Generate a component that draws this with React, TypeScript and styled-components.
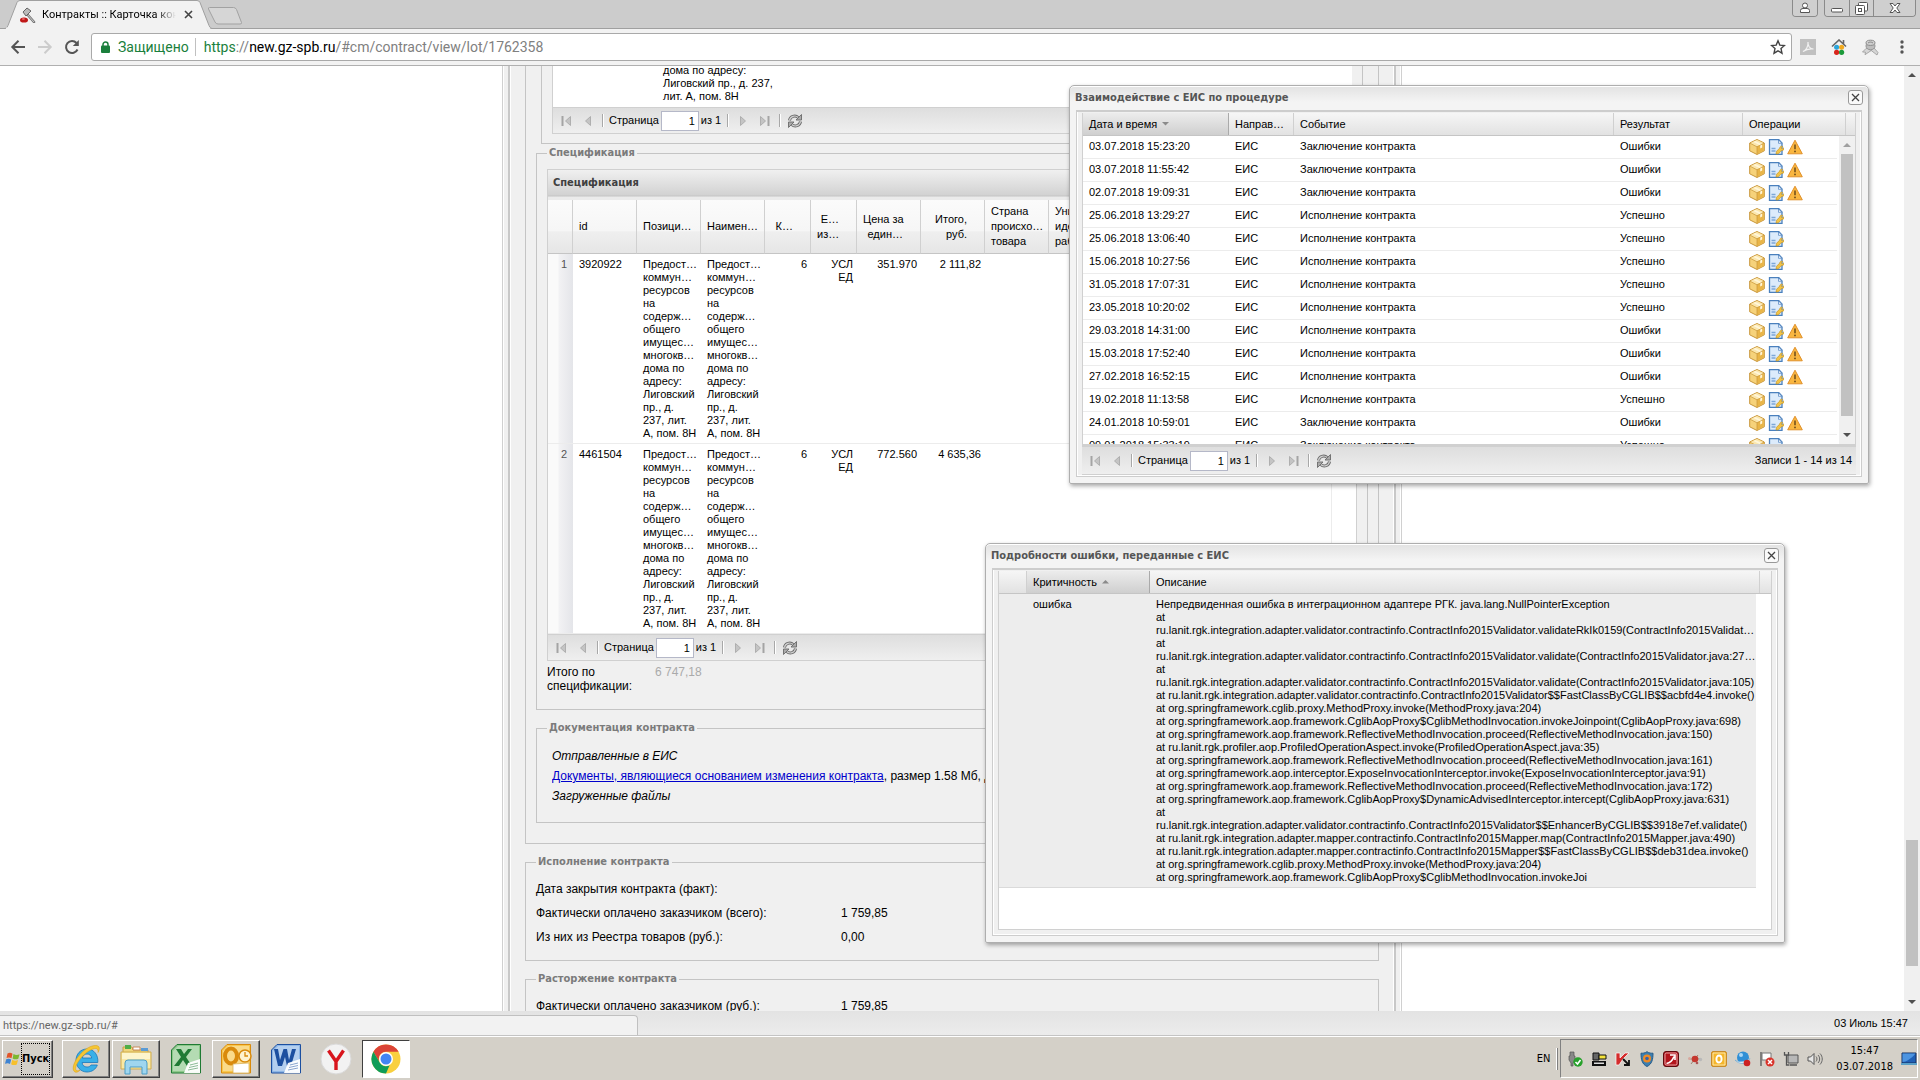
import React from 'react';
import styled, { createGlobalStyle, css } from 'styled-components';

const UI = '"DejaVu Sans Condensed", "DejaVu Sans", sans-serif';
const GRID = '"Liberation Sans", Arial, sans-serif';
const LINE = '#d0d0d0';

const GlobalStyle = createGlobalStyle`
  *, *::before, *::after { box-sizing: border-box; }
  html, body { margin: 0; height: 100%; }
  body { font: 12px/14px ${GRID}; color: #000; background: #fff; overflow: hidden; }
  button, input { font: inherit; color: inherit; padding: 0; margin: 0; }
  button { background: none; border: 0; }
  svg { display: block; flex: none; }
`;

const Screen = styled.div`
  position: relative;
  display: flex;
  flex-direction: column;
  height: 100vh;
  overflow: hidden;
`;

/* ---------- browser chrome ---------- */

const TabStrip = styled.header`
  display: flex;
  align-items: flex-start;
  height: 29px;
  padding: 0 4px;
  background: #ccc;
  border-bottom: 1px solid #a0a0a0;
`;

const Tab = styled.div`
  position: relative;
  display: flex;
  align-items: center;
  width: 208px;
  height: 29px;
  padding: 0 16px;
  font: 11px/14px Roboto, sans-serif;
`;

const TabShape = styled.svg`
  position: absolute;
  left: 0;
  top: 0;
`;

const TabTitle = styled.span`
  position: relative;
  flex: 1;
  margin: 0 8px 0 6px;
  overflow: hidden;
  white-space: nowrap;
  mask-image: linear-gradient(90deg, #000 85%, transparent);
`;

const TabIcon = styled.span`
  position: relative;
`;

const TabClose = styled.button`
  position: relative;
  width: 12px;
  height: 12px;
`;

const NewTab = styled.button`
  margin: 7px auto 0 -5px;
`;

const ChromeButtons = styled.div`
  display: flex;
  height: 17px;
  margin-left: 6px;
  border: 1px solid #8a8a8a;
  border-top: 0;
  border-radius: 0 0 4px 4px;
  overflow: hidden;
`;

const ChromeButton = styled.button<{ $wide?: boolean }>`
  display: flex;
  align-items: center;
  justify-content: center;
  width: ${p => (p.$wide ? 42 : 24)}px;
  background: #cfcfcf;
  & + & { border-left: 1px solid #8a8a8a; }
`;

const Toolbar = styled.nav`
  display: flex;
  align-items: center;
  height: 37px;
  padding: 0 10px;
  background: #f2f2f2;
  border-bottom: 1px solid #b0b0b0;
`;

const NavButton = styled.button`
  display: flex;
  justify-content: center;
  width: 16px;
  margin-right: 11px;
`;

const Omnibox = styled.div`
  flex: 1;
  display: flex;
  align-items: center;
  height: 28px;
  padding: 0 5px 0 9px;
  background: #fff;
  border: 1px solid #a9a9a9;
  border-radius: 3px;
  font: 14px/18px Roboto, sans-serif;
  color: #808080;
`;

const Secure = styled.span`
  margin-left: 8px;
  padding-right: 6px;
  border-right: 1px solid #c0c0c0;
  color: #1a7f3c;
`;

const Url = styled.span`
  flex: 1;
  margin-left: 8px;
  em { font-style: normal; color: #1a7f3c; }
  b { font-weight: 400; color: #000; }
`;

const Extensions = styled.div`
  display: flex;
  align-items: center;
  gap: 15px;
  padding-left: 8px;
`;

/* ---------- page ---------- */

const Viewport = styled.div`
  flex: 1;
  min-height: 0;
  display: flex;
  background: #fff;
`;

const Scroller = styled.main`
  flex: 1;
  min-width: 0;
  height: 100%;
  overflow: hidden;
`;

const PageFrame = styled.div`
  width: 900px;
  min-height: 100%;
  margin: 0 auto;
  padding: 0 5px;
  background: #f0f0f0;
  border: solid ${LINE};
  border-width: 0 1px;
  box-shadow: inset 1px 0 #fff, inset -1px 0 #fff;
`;

const PageBody = styled.div`
  min-height: 100%;
  padding: 0 15px;
  border: solid #c8c8c8;
  border-width: 0 2px;
  box-shadow: inset 1px 0 #fff, inset -1px 0 #fff;
`;

const Section = styled.fieldset<{ $top?: number; $open?: boolean }>`
  min-width: 0;
  margin: ${p => p.$top ?? 11}px 0 0;
  padding: 0 10px;
  border: 1px solid #c4c4c4;
  ${p => p.$open && css`border-top: 0;`}
`;

const Caption = styled.legend`
  padding: 0 2px;
  height: 14px;
  font: bold 11px/14px ${UI};
  color: #7b7b7b;
`;

const UpperBox = styled.div`
  margin: 0 5px;
  padding: 0 10px 9px;
  border: 1px solid #c4c4c4;
  border-top: 0;
`;

const UpperRow = styled.div`
  display: flex;
  align-items: flex-end;
  height: 41px;
  padding: 0 22px 4px 110px;
  overflow: hidden;
  background: #fff;
  border-left: 1px solid ${LINE};
  font-size: 11px;
  line-height: 13px;
`;

const OuterPad = styled.div`
  padding-bottom: 20px;
`;

const SpecPanel = styled.div`
  margin-top: 9px;
  border: 1px solid ${LINE};
  border-bottom: 0;
  background: #fff;
`;

const PanelTitle = styled.h2`
  margin: 0;
  height: 30px;
  padding: 6px 5px;
  font: bold 11px/14px ${UI};
  color: #404040;
  background: linear-gradient(#f0f0f0, #d2d2d2 25px, #c4c4c4 26px, #ebebeb 27px, #ebebeb);
`;

const SpecTable = styled.table`
  width: calc(100% - 24px);
  table-layout: fixed;
  border-collapse: separate;
  border-spacing: 0;
  border-right: 1px solid #ececec;
  font-size: 11px;
  line-height: 13px;
`;

const SpecHead = styled.th<{ $num?: boolean }>`
  height: 54px;
  padding: 0 ${p => (p.$num ? 17 : 0)}px 0 6px;
  font-weight: 400;
  line-height: 15px;
  white-space: pre;
  text-align: ${p => (p.$num ? 'right' : 'left')};
  vertical-align: middle;
  background: linear-gradient(#fbfbfb, #f6f6f6 58%, #efefef 60%, #e6e6e6);
  border-right: 1px solid ${LINE};
  border-bottom: 1px solid #c5c5c5;
`;

const SpecCell = styled.td<{ $num?: boolean; $index?: boolean }>`
  padding: 4px 4px 3px 6px;
  vertical-align: top;
  white-space: pre;
  overflow: hidden;
  text-align: ${p => (p.$num || p.$index ? 'right' : 'left')};
  border-bottom: 1px solid #ececec;
  ${p =>
    p.$index &&
    css`
      padding-right: 6px;
      color: #555;
      background: linear-gradient(90deg, #fafafa 10px, #f2f2f4 11px, #e4e5e9);
    `}
`;

const PagerBar = styled.div<{ $tall?: boolean }>`
  display: flex;
  align-items: center;
  height: ${p => (p.$tall ? 30 : 27)}px;
  padding: 0 3px;
  font-size: 11px;
  line-height: 13px;
  background: linear-gradient(#dedede, #efefef);
  border: 1px solid ${LINE};
  ${p => p.$tall && css`border-width: 2px 0 1px;`}
`;

const PagerButton = styled.button`
  display: flex;
  align-items: center;
  justify-content: center;
  width: 20px;
  height: 20px;
  & + & { margin-left: 2px; }
`;

const PagerRule = styled.i`
  width: 2px;
  height: 13px;
  margin: 0 4px;
  border-left: 1px solid #a8a8a8;
  border-right: 1px solid #fff;
`;

const PagerInput = styled.input`
  width: 38px;
  height: 20px;
  margin: 0 2px;
  padding-right: 3px;
  text-align: right;
  background: #fff;
  border: 1px solid #b5b8c8;
`;

const PagerText = styled.label`
  padding-left: 1px;
`;

const PagerTotal = styled.span`
  padding-right: 2px;
`;

const PagerInfo = styled.span`
  margin-left: auto;
  padding-right: 1px;
`;

const Total = styled.div`
  display: flex;
  margin: 4px 0 16px;
  span { width: 108px; white-space: pre; }
  output { color: #aaa; }
`;

const Docs = styled.div`
  padding: 11px 5px 16px;
  line-height: 20px;
  p { margin: 0; white-space: nowrap; overflow: hidden; }
  a { color: #0000cc; }
`;

const Facts = styled.dl`
  display: grid;
  grid-template-columns: 305px 1fr;
  grid-auto-rows: 24px;
  align-items: center;
  margin: 0;
  padding: 8px 0 11px;
  dd { margin: 0; }
`;

/* ---------- scrollbars ---------- */

const ScrollBar = styled.div`
  display: flex;
  flex-direction: column;
  align-items: center;
  width: 16px;
  background: #f0f0f0;
`;

const ScrollArrow = styled.button`
  display: flex;
  align-items: center;
  justify-content: center;
  width: 16px;
  height: 18px;
`;

const Track = styled.div<{ $before: number; $after: number; $thumb: number }>`
  flex: 1;
  display: grid;
  grid-template-rows: ${p => p.$before}fr ${p => p.$thumb}fr ${p => p.$after}fr;
  width: 12px;
  &::before { content: ''; grid-row: 2; background: #c1c1c1; }
`;

/* ---------- floating windows ---------- */

const Dialog = styled.section<{ $x: number; $y: number }>`
  position: absolute;
  left: ${p => p.$x}px;
  top: ${p => p.$y}px;
  width: 800px;
  background: linear-gradient(#e2e2e2, #f4f4f4 16px);
  border: 1px solid #aeaeae;
  border-radius: 5px 5px 2px 2px;
  box-shadow: inset 0 1px #fff, 1px 2px 4px rgba(0, 0, 0, 0.35);
  padding: 0 6px 6px;
`;

const DialogHead = styled.header`
  display: flex;
  align-items: center;
  justify-content: space-between;
  height: 24px;
  margin: 0 -1px;
  padding-bottom: 1px;
  font: bold 11px/14px ${UI};
  color: #555;
`;

const DialogClose = styled.button`
  display: flex;
  align-items: center;
  justify-content: center;
  width: 15px;
  height: 15px;
  background: #fafafa;
  border: 1px solid #999;
  border-radius: 3px;
`;

const DialogTitle = styled.h2`
  margin: 0;
  font: inherit;
`;

const DialogBody = styled.div<{ $bottom?: number }>`
  padding: 1px 5px ${p => p.$bottom ?? 1}px;
  background: #f0f0f0;
  border: 1px solid #cdcdcd;
  border-top-width: 2px;
  box-shadow: inset 1px 0 #fff, inset -1px 0 #fff, inset 0 -1px #fff;
`;

const GridBox = styled.div`
  position: relative;
  background: #fff;
  border: 1px solid ${LINE};
  border-top: 0;
`;

const GridTable = styled.table<{ $height: number; $cols: string; $gutter: number }>`
  display: block;
  font-size: 11px;
  line-height: 13px;
  thead { display: block; background: linear-gradient(#f6f6f6, #e2e2e2); border-bottom: 1px solid #c5c5c5; }
  tbody { display: block; height: ${p => p.$height}px; padding-right: ${p => p.$gutter}px; overflow: hidden; }
  tr { display: grid; grid-template-columns: ${p => p.$cols}; }
  td[colspan='2'] { grid-column: span 2; }
`;

const HeadCell = styled.th<{ $sorted?: boolean }>`
  display: flex;
  align-items: center;
  gap: 5px;
  height: 22px;
  padding: 0 6px;
  font-weight: 400;
  white-space: nowrap;
  border-right: 1px solid ${LINE};
  ${p => p.$sorted && css`background: linear-gradient(#ececec, #cfcfcf); border-right-color: #aaa;`}
`;

const Row = styled.tr<{ $selected?: boolean }>`
  border-bottom: 1px solid #ececec;
  ${p => p.$selected && css`background: #ededed; border-color: #dadada;`}
`;

const Cell = styled.td`
  min-width: 0;
  padding: 4px 0 3px 6px;
  white-space: nowrap;
`;

const IconCell = styled.td`
  display: flex;
  align-items: center;
  gap: 3px;
  padding-left: 6px;
  height: 22px;
`;

const IconButton = styled.button`
  width: 16px;
  height: 16px;
`;

const TraceLine = styled.div`
  overflow: hidden;
  text-overflow: ellipsis;
`;

const GridScroll = styled(ScrollBar)`
  position: absolute;
  right: 0;
  top: 23px;
  bottom: 0;
`;

/* ---------- status bar and taskbar ---------- */

const StatusBar = styled.footer`
  display: flex;
  align-items: flex-end;
  justify-content: space-between;
  height: 25px;
  padding-right: 12px;
  background: linear-gradient(#e3e3e3, #ececec);
  border-bottom: 1px solid #c4c4c4;
  font-size: 11px;
`;

const LinkHint = styled.span`
  width: 638px;
  height: 20px;
  padding: 3px;
  font: 11px/14px Roboto, sans-serif;
  color: #666;
  background: #f2f2f2;
  border: solid #c0c0c0;
  border-width: 1px 1px 0 0;
  border-radius: 0 4px 0 0;
`;

const StatusDate = styled.time`
  align-self: center;
`;

const Taskbar = styled.footer`
  display: flex;
  align-items: center;
  gap: 2px;
  height: 44px;
  padding: 0 2px;
  background: #d4d0c8;
  border-top: 1px solid #fff;
  font: 11px/16px ${UI};
`;

const raised = css`
  border: 1px solid;
  border-color: #fff #404040 #404040 #fff;
  box-shadow: inset -1px -1px #808080;
`;

const StartButton = styled.button`
  ${raised}
  display: flex;
  align-items: center;
  width: 51px;
  height: 38px;
  margin-right: 7px;
  padding: 0 2px;
  font-weight: bold;
  span { padding: 7px 0; border: 1px dotted #000; }
`;

const TaskButton = styled.button<{ $state?: 'open' | 'active' }>`
  display: flex;
  align-items: center;
  justify-content: center;
  width: 48px;
  height: 38px;
  ${p => p.$state === 'open' && raised}
  ${p => p.$state === 'active' && css`background: #fff; border: 1px solid; border-color: #404040 #fff #fff #404040;`}
`;

const Lang = styled.span`
  margin-left: auto;
  padding-right: 4px;
`;

const LangRule = styled.i`
  width: 2px;
  height: 22px;
  border-left: 1px solid #fff;
  border-right: 1px solid #808080;
`;

const Tray = styled.div`
  display: flex;
  align-items: center;
  gap: 8px;
  height: 39px;
  padding: 0 0 0 6px;
  border: 1px solid;
  border-color: #808080 #fff #fff #808080;
`;

const Clock = styled.time`
  padding: 0 0 0 5px;
  text-align: center;
  white-space: pre;
`;

/* ---------- icons ---------- */

const Gavel = () => (
  <svg width="16" height="16" viewBox="0 0 16 16">
    <path d="M7 7l7 8" stroke="#777" strokeWidth="2.6" strokeLinecap="round" />
    <path d="M7 7l7 8" stroke="#ccc" strokeWidth="1" />
    <path d="M3 5l4-4 4 3-5 5z" fill="#bbb" stroke="#666" />
    <ellipse cx="4" cy="13" rx="4" ry="2.6" fill="#c01818" />
    <ellipse cx="3.4" cy="12" rx="1.6" ry=".8" fill="#f47a7a" />
  </svg>
);

const Cross = ({ s = 9, w = 1.6, c = '#444' }: { s?: number; w?: number; c?: string }) => (
  <svg width={s} height={s} viewBox="0 0 9 9"><path d="M1 1l7 7M8 1L1 8" stroke={c} strokeWidth={w} /></svg>
);

const Arrow = ({ dir, c }: { dir: 1 | -1; c: string }) => (
  <svg width="16" height="16" viewBox="0 0 16 16">
    <path transform={dir < 0 ? undefined : 'translate(16 0) scale(-1 1)'} d="M15 8H2.5M8.500 1.800L2.300 8l6.200 6.200" fill="none" stroke={c} strokeWidth="2" />
  </svg>
);

const Reload = () => (
  <svg width="16" height="16" viewBox="0 0 16 16">
    <path d="M13.500 10.500A6 6 0 1 1 12.500 4" fill="none" stroke="#555" strokeWidth="2" />
    <path d="M14.800 1v6H8.800z" fill="#555" />
  </svg>
);

const Lock = () => (
  <svg width="9" height="12" viewBox="0 0 9 12">
    <path d="M2 6V3.500a2.500 2.500 0 0 1 5 0V6" fill="none" stroke="#1a7f3c" strokeWidth="1.500" />
    <rect y="4.500" width="9" height="7.500" rx="1" fill="#1a7f3c" />
  </svg>
);

const Star = () => (
  <svg width="16" height="16" viewBox="0 0 16 16">
    <path d="M8 1.800l1.800 4.300 4.700.400-3.500 3.100 1 4.600L8 11.800l-4 2.400 1-4.600L1.500 6.500l4.700-.400z" fill="none" stroke="#444" strokeWidth="1.400" />
  </svg>
);

const PdfExt = () => (
  <svg width="16" height="16" viewBox="0 0 16 16">
    <rect width="16" height="16" fill="#c0c0c0" />
    <path d="M3 12.500c3-1 5.500-5 5-9.500-.500 4 2 7 5.500 7-4-.500-7 0-10.500 2.500z" fill="none" stroke="#f2f2f2" strokeWidth="1.200" />
  </svg>
);

const HouseExt = () => (
  <svg width="16" height="16" viewBox="0 0 16 16">
    <path d="M1 7.500L8 1l7 6.500M12.500 1v4" fill="none" stroke="#666" strokeWidth="1.600" />
    <circle cx="5.600" cy="8.200" r="2.500" fill="#2aa5dc" /><circle cx="10.600" cy="8.200" r="2.500" fill="#f1a91e" />
    <circle cx="5.600" cy="13.300" r="2.600" fill="#d8261c" /><circle cx="10.600" cy="13.300" r="2.600" fill="#1c9a3a" />
  </svg>
);

const StampExt = () => (
  <svg width="17" height="17" viewBox="0 0 17 17">
    <path d="M4 9.500L.5 13l3 .2-.5 2.500L13 9z" fill="#d6d6d6" stroke="#999" strokeWidth=".8" />
    <path d="M6 9l9 7 1-2.500-3.500-4z" fill="#d6d6d6" stroke="#999" strokeWidth=".8" />
    <ellipse cx="8.500" cy="7" rx="4.500" ry="3.800" fill="#bdbdbd" stroke="#929292" />
    <ellipse cx="8.500" cy="3.800" rx="4.500" ry="2.600" fill="#d0d0d0" stroke="#8a8a8a" />
    <path d="M6 4c1.500-1.200 3.500-1.200 5 0" stroke="#888" fill="none" />
  </svg>
);

const Dots = () => (
  <svg width="16" height="14" viewBox="0 0 16 14"><g fill="#555"><circle cx="8" cy="2" r="1.700" /><circle cx="8" cy="7" r="1.700" /><circle cx="8" cy="12" r="1.700" /></g></svg>
);

const PageTurn = ({ back, end }: { back?: boolean; end?: boolean }) => (
  <svg width="12" height="12" viewBox="0 0 12 12">
    <g transform={back ? 'translate(12 0) scale(-1 1)' : undefined}>
      <path d={end ? 'M1.500 1.500v9L6.500 6z' : 'M3.500 1.500v9L8.500 6z'} fill="#c4c4c4" stroke="#a4a4a4" strokeWidth=".8" />
      {end && <path d="M9.500 1v10" stroke="#a4a4a4" strokeWidth="2" />}
    </g>
  </svg>
);

const Refresh = () => (
  <svg width="16" height="16" viewBox="0 0 16 16">
    <g fill="none" stroke="#6a6a6a" strokeWidth="3"><path d="M2.500 7.500C3 3.500 8 1.500 11.300 4.500" /><path d="M13.500 8.500C13 12.500 8 14.500 4.700 11.500" /></g>
    <g fill="none" stroke="#d2d2d2" strokeWidth="1.200"><path d="M2.500 7.500C3 3.500 8 1.500 11.300 4.500" /><path d="M13.500 8.500C13 12.500 8 14.500 4.700 11.500" /></g>
    <path d="M14.500 1.500V7H9zM1.500 14.500V9H7z" fill="#aaa" stroke="#6a6a6a" strokeWidth=".9" />
  </svg>
);

const Caret = ({ up, c = '#505050', s = 8 }: { up?: boolean; c?: string; s?: number }) => (
  <svg width={s} height={s / 2} viewBox="0 0 8 4"><path d={up ? 'M0 4l4-4 4 4z' : 'M0 0h8L4 4z'} fill={c} /></svg>
);

const BoxIcon = () => (
  <svg width="16" height="16" viewBox="0 0 16 16">
    <path d="M8 .500l7.300 3.500v7.800L8 15.500.700 11.800V4z" fill="#f6d27a" stroke="#c8963a" />
    <path d="M8 1L1.200 4.300 8 7.800l6.800-3.500z" fill="#fbe7ae" />
    <path d="M8 7.800V15l6.800-3.500V4.300z" fill="#e9b548" />
    <path d="M4.300 2.900l6.900 3.500v3.200l2-1V5.300L6.300 1.900z" fill="#fff6da" />
    <path d="M1 4.200L8 7.800l7-3.600M8 7.800V15" stroke="#c8963a" strokeWidth=".7" fill="none" />
  </svg>
);

const DocIcon = () => (
  <svg width="16" height="16" viewBox="0 0 16 16">
    <path d="M1.500.700h9.300l3.200 3.200v11.400H1.500z" fill="#dcebfb" stroke="#4a80bd" strokeWidth="1.300" />
    <path d="M10.500 1v3.300h3.300z" fill="#fff" stroke="#4a80bd" strokeWidth=".7" />
    <path d="M3.500 9.500h4M3.500 12h4" stroke="#7da7d8" strokeWidth="1.300" />
    <path d="M8 15l.500-2.700 3.200-3.200c0-1.800 1.500-2.400 3-1.600l-1.400 1.600 1 1 1.500-1.300c.500 2-.700 3-2.200 2.800L10.300 14.800z" fill="#f3c345" stroke="#c08f1c" strokeWidth=".6" />
  </svg>
);

const WarnIcon = () => (
  <svg width="16" height="16" viewBox="0 0 16 16">
    <path d="M8 1.200L15.300 14.800H.700z" fill="#f9b640" stroke="#e0902a" strokeLinejoin="round" />
    <path d="M8 5.500v4.700" stroke="#6b4a1a" strokeWidth="1.500" /><circle cx="8" cy="12.400" r=".9" fill="#6b4a1a" />
  </svg>
);

const WinFlag = () => (
  <svg width="16" height="16" viewBox="0 0 16 16">
    <path d="M2.500 2.500C4 1.500 6 1.500 7.500 2.700L6.500 7.300C5 6.200 3 6.200 1.500 7z" fill="#e2552a" />
    <path d="M8.500 3c2 1.200 4 1.200 6 .2l-1.200 4.500c-1.800.900-3.800.900-5.700-.200z" fill="#7db72f" />
    <path d="M1.200 8.300c1.600-.9 3.500-.9 5 .2L5 13C3.500 12 2 12 0 12.800z" fill="#3f84d2" />
    <path d="M7.300 8.800c1.900 1.100 3.900 1.100 5.700.2l-1.200 4.400c-1.900 1-3.900.900-5.700-.200z" fill="#f7c02c" />
  </svg>
);

const IEIcon = () => (
  <svg width="32" height="32" viewBox="0 0 32 32">
    <path d="M17 6C10 6 6 11.500 6 17.500S10.500 29 17 29c5 0 9-2.800 10.300-7H21c-.9 1.400-2.200 2-4 2-2.700 0-4.700-1.700-4.900-4.500h15.700C28.500 12 24 6 17 6zm-4.700 9c.5-2.500 2.300-4 4.700-4s4.300 1.500 4.700 4z" fill="#39b0e8" stroke="#1777bb" strokeWidth=".8" />
    <path d="M5 29C0 26 6 14 14 7.500 20 2.500 27.500 1 29 4c.7 1.300.2 3.300-1 5.500C28.500 6.500 27 4.500 23 6 13 9.500 3.500 23.500 6 27c.7 1 2.200.9 4 .2C8 29 6.300 29.600 5 29z" fill="#f6c632" stroke="#d79b12" strokeWidth=".5" />
  </svg>
);

const FolderIcon = () => (
  <svg width="34" height="32" viewBox="0 0 34 32">
    <path d="M4 4h9l1 3h15v18H4z" fill="#f0d57c" stroke="#c6a044" />
    <path d="M6 2h6v4H6z" fill="#4fae48" /><path d="M14 4h7v3h-7z" fill="#fff" stroke="#c98b5c" /><path d="M22 5h7v3h-7z" fill="#5b9bd5" />
    <path d="M2 9h30v17H2z" fill="#f9e8a4" stroke="#d0ac4c" /><path d="M3 10h28v6H3z" fill="#fdf5cc" />
    <path d="M6 31V20q0-3 3-3h16q3 0 3 3v11h-5v-7H11v7z" fill="#9fd6ef" stroke="#4d9dc6" />
  </svg>
);

const OfficeIcon = ({ bg, dark, letter }: { bg: string; dark: string; letter: 'X' | 'W' | 'O' }) => (
  <svg width="32" height="32" viewBox="0 0 32 32">
    <path d="M7 1.500h23.500V30H1.500V7z" fill={bg} stroke={dark} />
    <path d="M8 3h21v25H3V8z" fill="#fff" opacity=".35" />
    {letter === 'X' && <path d="M6 6h5l3 5 4-5h4l-6 8 6 9h-5l-4-6-4 6H4l7-9z" fill={dark} />}
    {letter === 'W' && <path d="M4 6h4l2 11 3.500-11h3.500l2 11L22 6h4l-5 17h-4l-2-9-3 9H8z" fill={dark} />}
    {letter === 'O' && <ellipse cx="11" cy="13" rx="6" ry="7.500" fill="none" stroke={dark} strokeWidth="4" />}
    {letter === 'O' ? (
      <><circle cx="25" cy="13" r="6" fill="#fff3cf" stroke={dark} strokeWidth="1.500" /><path d="M25 9v4h3" stroke={dark} fill="none" strokeWidth="1.300" /><path d="M13 21l16-1v10H13z" fill="#fff" stroke="#d8b25c" strokeWidth=".8" /></>
    ) : (
      <><path d="M18 20l12-4v14H14z" fill="#fff" opacity=".95" /><path d="M20 22l8-2M19 24.500l9-2M18 27l10-2" stroke={dark} opacity=".5" /></>
    )}
  </svg>
);

const YandexIcon = () => (
  <svg width="32" height="32" viewBox="0 0 32 32">
    <circle cx="16" cy="16" r="15" fill="#f2f2f2" stroke="#dadada" />
    <path d="M8.500 7.500L16 18.500 23.500 7.500M16 17.500V27" fill="none" stroke="#d8141c" strokeWidth="3.400" />
  </svg>
);

const ChromeIcon = () => (
  <svg width="30" height="30" viewBox="0 0 30 30">
    <circle cx="15" cy="15" r="14.500" fill="#f9d03f" />
    <path d="M2.440 7.750A14.500 14.500 0 0 1 27.560 7.750H15A7.250 7.250 0 0 0 8.700 18.600z" fill="#db4437" />
    <path d="M2.440 7.750L8.720 18.620A7.250 7.250 0 0 0 18.600 21.300L15 29.500A14.500 14.500 0 0 1 2.440 7.750z" fill="#0f9d58" />
    <circle cx="15" cy="15" r="7" fill="#fff" /><circle cx="15" cy="15" r="5.500" fill="#4285f4" />
  </svg>
);

const TrayIcon = ({ children }: { children: React.ReactNode }) => <svg width="16" height="16" viewBox="0 0 16 16">{children}</svg>;

const trayIcons = [
  <><path d="M3 1h4v4h1v4l-2 3v3H4v-3L2 9V5h1z" fill="#888" stroke="#555" strokeWidth=".7" /><circle cx="11" cy="11" r="4.700" fill="#27a12b" /><path d="M8.500 11l2 2 3-4" stroke="#fff" strokeWidth="1.600" fill="none" /></>,
  <><path d="M1 10h14v5H1z" fill="#111" /><path d="M3 11.500h10v1.500H3z" fill="#ddd" /><path d="M2 2h6v7H2z" fill="#666" stroke="#111" /><path d="M8 4h7v4H8z" fill="#f4e33a" stroke="#111" /></>,
  <><path d="M1 2h4v5l5-5h4L8 8l-4 6H1z" fill="#d42c2c" stroke="#fff" strokeWidth=".7" /><path d="M8 8l6 6M14 9v5H9" stroke="#111" strokeWidth="1.800" fill="none" /></>,
  <><path d="M8 .700c2 1.500 4.500 1.600 6 1.500 0 6-1 11-6 13.300C3 13.200 2 8.200 2 2.200 3.500 2.300 6 2.200 8 .700z" fill="#3c7fb1" stroke="#265a86" /><circle cx="8" cy="7.500" r="4" fill="#f08a24" /><circle cx="8" cy="7.500" r="1.800" fill="#3763a8" /></>,
  <><rect x=".500" y=".500" width="15" height="15" rx="2.500" fill="#b3141c" stroke="#5d0a0e" /><rect x="2" y="2" width="12" height="12" rx="1.500" fill="none" stroke="#f0c8c8" strokeWidth=".8" /><path d="M3.500 12.500c4-.5 6-3 7.500-7M12 9V4H7" stroke="#fff" strokeWidth="1.600" fill="none" /></>,
  <><path d="M2 8h12M4 13l7-9" stroke="#a08070" /><circle cx="8" cy="8" r="3.300" fill="#c5382f" /><circle cx="2.500" cy="7.500" r="1.500" fill="#d8a89e" /><circle cx="13.500" cy="8.500" r="1.700" fill="#b9b9b9" /><circle cx="10" cy="12" r="1.300" fill="#a55" /></>,
  <><rect x=".700" y=".700" width="14.600" height="14.600" rx="1" fill="#f5b62a" stroke="#c27c10" /><path d="M2 2h12v12H2z" fill="none" stroke="#fce7ad" /><ellipse cx="8" cy="8" rx="2.600" ry="3.500" fill="none" stroke="#fff" strokeWidth="1.900" /></>,
  <><circle cx="8" cy="6.500" r="6" fill="#2f8fd6" /><path d="M0 9c3 2.500 11 2 15-1.500-1 5-11 7-15 1.500z" fill="#e6f2fb" stroke="#5ba1d0" strokeWidth=".5" /><circle cx="6" cy="4" r="2" fill="#a9d6f5" /><circle cx="12" cy="12" r="3.300" fill="#cc2222" /></>,
  <><path d="M2 1v14" stroke="#555" strokeWidth="1.300" /><path d="M3 2h9v7H3z" fill="#fff" stroke="#777" /><circle cx="11" cy="11" r="4.500" fill="#d9342b" /><path d="M9 9l4 4M13 9l-4 4" stroke="#fff" strokeWidth="1.500" /></>,
  <><path d="M5 4h10v8H5z" fill="#b8b8b8" stroke="#555" /><path d="M7 14h7" stroke="#555" strokeWidth="1.500" /><path d="M1.500 1v3h4V1M3.500 4v10h3" stroke="#555" fill="none" strokeWidth="1.300" /></>,
  <><path d="M1 6h2.500L7 2.500v11L3.500 10H1z" fill="#e6e6e6" stroke="#555" /><path d="M9 5.500c1.300 1.500 1.300 3.500 0 5M11 4c2.200 2.300 2.200 5.700 0 8M13 2.500c3 3.200 3 7.800 0 11" stroke="#666" fill="none" /></>,
];

const Desktop = () => (
  <svg width="16" height="16" viewBox="0 0 16 16"><path d="M1 2h14v10H1z" fill="#1f5fb5" stroke="#16315e" /><path d="M1.500 11C5 11 10 8 14.500 2.500h-13z" fill="#4d94e0" /><path d="M0 12h16v2H0z" fill="#5aa0c8" /></svg>
);

/* ---------- data ---------- */

const specName = 'Предост…\nкоммун…\nресурсов\nна\nсодерж…\nобщего\nимущес…\nмногокв…\nдома по\nадресу:\nЛиговский\nпр., д.\n237, лит.\nА, пом. 8Н';

const specCols = [25, 64, 64, 64, 46, 46, 64, 64, 64];
const specHeads: [string, boolean][] = [
  ['', false], ['id', false], ['Позици…', false], ['Наимен…', false], ['К…', true], ['Е…\nиз…', true],
  ['Цена за\nедин…', true], ['Итого,\nруб.', true], ['Страна\nпроисхо…\nтовара', false], ['Уни…\nиден…\nрабо…', false],
];
const specRows = [
  { n: 1, id: '3920922', price: '351.970', sum: '2 111,82' },
  { n: 2, id: '4461504', price: '772.560', sum: '4 635,36' },
];

const events: [string, string, boolean][] = [
  ['03.07.2018 15:23:20', 'Заключение контракта', false],
  ['03.07.2018 11:55:42', 'Заключение контракта', false],
  ['02.07.2018 19:09:31', 'Заключение контракта', false],
  ['25.06.2018 13:29:27', 'Исполнение контракта', true],
  ['25.06.2018 13:06:40', 'Исполнение контракта', true],
  ['15.06.2018 10:27:56', 'Исполнение контракта', true],
  ['31.05.2018 17:07:31', 'Исполнение контракта', true],
  ['23.05.2018 10:20:02', 'Исполнение контракта', true],
  ['29.03.2018 14:31:00', 'Исполнение контракта', false],
  ['15.03.2018 17:52:40', 'Исполнение контракта', false],
  ['27.02.2018 16:52:15', 'Исполнение контракта', false],
  ['19.02.2018 11:13:58', 'Исполнение контракта', true],
  ['24.01.2018 10:59:01', 'Заключение контракта', false],
  ['09.01.2018 15:33:19', 'Заключение контракта', true],
];

const V = 'ru.lanit.rgk.integration.adapter.validator.contractinfo.ContractInfo2015Validator';
const M = 'ru.lanit.rgk.integration.adapter.mapper.contractinfo.ContractInfo2015Mapper';
const S = 'at org.springframework.';
const trace = [
  'Непредвиденная ошибка в интеграционном адаптере РГК. java.lang.NullPointerException',
  'at',
  V + '.validateRkIk0159(ContractInfo2015Validator.java:312)',
  'at',
  V + '.validate(ContractInfo2015Validator.java:27…',
  'at',
  V + '.validate(ContractInfo2015Validator.java:105)',
  'at ' + V + '$$FastClassByCGLIB$$acbfd4e4.invoke()',
  S + 'cglib.proxy.MethodProxy.invoke(MethodProxy.java:204)',
  S + 'aop.framework.CglibAopProxy$CglibMethodInvocation.invokeJoinpoint(CglibAopProxy.java:698)',
  S + 'aop.framework.ReflectiveMethodInvocation.proceed(ReflectiveMethodInvocation.java:150)',
  'at ru.lanit.rgk.profiler.aop.ProfiledOperationAspect.invoke(ProfiledOperationAspect.java:35)',
  S + 'aop.framework.ReflectiveMethodInvocation.proceed(ReflectiveMethodInvocation.java:161)',
  S + 'aop.interceptor.ExposeInvocationInterceptor.invoke(ExposeInvocationInterceptor.java:91)',
  S + 'aop.framework.ReflectiveMethodInvocation.proceed(ReflectiveMethodInvocation.java:172)',
  S + 'aop.framework.CglibAopProxy$DynamicAdvisedInterceptor.intercept(CglibAopProxy.java:631)',
  'at',
  V + '$$EnhancerByCGLIB$$3918e7ef.validate()',
  'at ' + M + '.map(ContractInfo2015Mapper.java:490)',
  'at ' + M + '$$FastClassByCGLIB$$deb31dea.invoke()',
  S + 'cglib.proxy.MethodProxy.invoke(MethodProxy.java:204)',
  S + 'aop.framework.CglibAopProxy$CglibMethodInvocation.invokeJoi',
];

/* ---------- parts ---------- */

const Pager = ({ id, info }: { id: string; info?: string }) => (
  <PagerBar $tall={!!info}>
    <PagerButton aria-label="Первая страница"><PageTurn back end /></PagerButton>
    <PagerButton aria-label="Предыдущая страница"><PageTurn back /></PagerButton>
    <PagerRule />
    <PagerText htmlFor={id}>Страница</PagerText>
    <PagerInput id={id} defaultValue="1" />
    <PagerTotal>из 1</PagerTotal>
    <PagerRule />
    <PagerButton aria-label="Следующая страница"><PageTurn /></PagerButton>
    <PagerButton aria-label="Последняя страница"><PageTurn end /></PagerButton>
    <PagerRule />
    <PagerButton aria-label="Обновить"><Refresh /></PagerButton>
    {info && <PagerInfo>{info}</PagerInfo>}
  </PagerBar>
);

const DialogFrame = ({ title, x, y, bottom, children }: { title: string; x: number; y: number; bottom?: number; children: React.ReactNode }) => (
  <Dialog $x={x} $y={y}>
    <DialogHead>
      <DialogTitle>{title}</DialogTitle>
      <DialogClose aria-label="Закрыть"><Cross w={1.3} /></DialogClose>
    </DialogHead>
    <DialogBody $bottom={bottom}>{children}</DialogBody>
  </Dialog>
);

const ContractPage = () => (
  <PageFrame>
    <PageBody>
      <Section $top={0} $open>
        <OuterPad>
          <UpperBox>
            <UpperRow><span>дома по адресу:<br />Лиговский пр., д. 237,<br />лит. А, пом. 8Н</span></UpperRow>
            <Pager id="page-upper" />
          </UpperBox>
          <Section $top={2}>
            <Caption>Спецификация</Caption>
            <SpecPanel>
              <PanelTitle>Спецификация</PanelTitle>
              <SpecTable>
                <colgroup>{specCols.map((w, i) => <col key={i} width={w} />)}<col /></colgroup>
                <thead><tr>{specHeads.map(([t, num], i) => <SpecHead key={i} $num={num}>{t}</SpecHead>)}</tr></thead>
                <tbody>
                  {specRows.map(r => (
                    <tr key={r.n}>
                      <SpecCell $index>{r.n}</SpecCell>
                      <SpecCell>{r.id}</SpecCell>
                      <SpecCell>{specName}</SpecCell>
                      <SpecCell>{specName}</SpecCell>
                      <SpecCell $num>6</SpecCell>
                      <SpecCell $num>{'УСЛ\nЕД'}</SpecCell>
                      <SpecCell $num>{r.price}</SpecCell>
                      <SpecCell $num>{r.sum}</SpecCell>
                      <SpecCell /><SpecCell />
                    </tr>
                  ))}
                </tbody>
              </SpecTable>
            </SpecPanel>
            <Pager id="page-spec" />
            <Total><span>{'Итого по\nспецификации:'}</span><output>6 747,18</output></Total>
          </Section>
          <Section>
            <Caption>Документация контракта</Caption>
            <Docs>
              <p><i>Отправленные в ЕИС</i></p>
              <p><a href="#doc">Документы, являющиеся основанием изменения контракта</a>, размер 1.58 Мб, дата</p>
              <p><i>Загруженные файлы</i></p>
            </Docs>
          </Section>
        </OuterPad>
      </Section>
      <Section>
        <Caption>Исполнение контракта</Caption>
        <Facts>
          <dt>Дата закрытия контракта (факт):</dt><dd />
          <dt>Фактически оплачено заказчиком (всего):</dt><dd>1 759,85</dd>
          <dt>Из них из Реестра товаров (руб.):</dt><dd>0,00</dd>
        </Facts>
      </Section>
      <Section>
        <Caption>Расторжение контракта</Caption>
        <Facts><dt>Фактически оплачено заказчиком (руб.):</dt><dd>1 759,85</dd></Facts>
      </Section>
    </PageBody>
  </PageFrame>
);

export default function App() {
  return (
    <Screen>
      <GlobalStyle />
      <TabStrip>
        <Tab>
          <TabShape width="208" height="29" viewBox="0 0 208 29">
            <path d="M1 28.500q2 0 3-3L13 2.500Q14 .500 16 .500H193q2 0 3 2L205 25.500q1 3 3 3V29H0v-.500z" fill="#f2f2f2" stroke="#a0a0a0" />
            <path d="M2 28.500h204" stroke="#f2f2f2" strokeWidth="2" />
          </TabShape>
          <TabIcon><Gavel /></TabIcon>
          <TabTitle>Контракты :: Карточка контракта</TabTitle>
          <TabClose aria-label="Закрыть вкладку"><Cross /></TabClose>
        </Tab>
        <NewTab aria-label="Новая вкладка">
          <svg width="36" height="18" viewBox="0 0 36 18"><path d="M2.500.500h24q2 0 3 2l5 13q.500 1.500-1.500 1.500H11q-2 0-3-2L1.500 2Q1 .500 2.500.500z" fill="#d6d6d6" stroke="#a2a2a2" /></svg>
        </NewTab>
        <ChromeButtons>
          <ChromeButton aria-label="Пользователь">
            <svg width="12" height="12" viewBox="0 0 12 12"><g fill="#fff" stroke="#555"><circle cx="6" cy="3.500" r="2.500" /><path d="M1.500 10.500V8.500Q1.500 6.500 4 6.500h4q2.500 0 2.500 2v2z" /></g></svg>
          </ChromeButton>
        </ChromeButtons>
        <ChromeButtons>
          <ChromeButton aria-label="Свернуть">
            <svg width="12" height="12" viewBox="0 0 12 12"><rect x=".500" y="6.500" width="11" height="3.500" rx="1" fill="#fff" stroke="#555" /></svg>
          </ChromeButton>
          <ChromeButton aria-label="Восстановить">
            <svg width="13" height="13" viewBox="0 0 13 13"><g fill="#fff" stroke="#555"><rect x="3.500" y=".500" width="9" height="8.500" rx="1" /><rect x=".500" y="3.500" width="9" height="9" rx="1" /><rect x="3.500" y="6.500" width="3" height="3" /></g></svg>
          </ChromeButton>
          <ChromeButton $wide aria-label="Закрыть">
            <svg width="12" height="12" viewBox="0 0 12 12"><path d="M1 1.500h3L6 4l2-2.500h3L7.800 6l3.200 4.500H8L6 8l-2 2.500H1L4.200 6z" fill="#fff" stroke="#555" /></svg>
          </ChromeButton>
        </ChromeButtons>
      </TabStrip>
      <Toolbar>
        <NavButton aria-label="Назад"><Arrow dir={-1} c="#555" /></NavButton>
        <NavButton aria-label="Вперёд"><Arrow dir={1} c="#ccc" /></NavButton>
        <NavButton aria-label="Обновить"><Reload /></NavButton>
        <Omnibox>
          <Lock />
          <Secure>Защищено</Secure>
          <Url><em>https</em>://<b>new.gz-spb.ru</b>/#cm/contract/view/lot/1762358</Url>
          <Star />
        </Omnibox>
        <Extensions><PdfExt /><HouseExt /><StampExt /><Dots /></Extensions>
      </Toolbar>
      <Viewport>
        <Scroller><ContractPage /></Scroller>
        <ScrollBar>
          <ScrollArrow aria-label="Вверх"><Caret up /></ScrollArrow>
          <Track $before={756} $thumb={126} $after={27} />
          <ScrollArrow aria-label="Вниз"><Caret /></ScrollArrow>
        </ScrollBar>
      </Viewport>
      <StatusBar>
        <LinkHint>https://new.gz-spb.ru/#</LinkHint>
        <StatusDate>03 Июль 15:47</StatusDate>
      </StatusBar>
      <Taskbar>
        <StartButton><WinFlag /><span>Пуск</span></StartButton>
        <TaskButton $state="open" aria-label="Internet Explorer"><IEIcon /></TaskButton>
        <TaskButton $state="open" aria-label="Проводник"><FolderIcon /></TaskButton>
        <TaskButton aria-label="Excel"><OfficeIcon bg="#8cc88a" dark="#1f7a34" letter="X" /></TaskButton>
        <TaskButton $state="open" aria-label="Outlook"><OfficeIcon bg="#f8c74c" dark="#d98a0c" letter="O" /></TaskButton>
        <TaskButton aria-label="Word"><OfficeIcon bg="#8db6e6" dark="#1c4fa0" letter="W" /></TaskButton>
        <TaskButton aria-label="Яндекс"><YandexIcon /></TaskButton>
        <TaskButton $state="active" aria-label="Chrome"><ChromeIcon /></TaskButton>
        <Lang>EN</Lang>
        <LangRule />
        <Tray>
          {trayIcons.map((icon, i) => <TrayIcon key={i}>{icon}</TrayIcon>)}
          <Clock>{'15:47\n03.07.2018'}</Clock>
          <Desktop />
        </Tray>
      </Taskbar>

      <DialogFrame title="Взаимодействие с ЕИС по процедуре" x={1069} y={85}>
        <GridBox>
          <GridTable $height={308} $gutter={18} $cols="146px 65px 320px 129px 103px">
            <thead>
              <tr>
                <HeadCell $sorted>Дата и время <Caret c="#8a8a8a" s={7} /></HeadCell>
                <HeadCell>Направ…</HeadCell>
                <HeadCell>Событие</HeadCell>
                <HeadCell>Результат</HeadCell>
                <HeadCell>Операции</HeadCell>
              </tr>
            </thead>
            <tbody>
              {events.map(([when, what, ok]) => (
                <Row key={when}>
                  <Cell>{when}</Cell>
                  <Cell>ЕИС</Cell>
                  <Cell>{what}</Cell>
                  <Cell>{ok ? 'Успешно' : 'Ошибки'}</Cell>
                  <IconCell>
                    <IconButton aria-label="Пакет"><BoxIcon /></IconButton>
                    <IconButton aria-label="Документ"><DocIcon /></IconButton>
                    {!ok && <IconButton aria-label="Ошибки"><WarnIcon /></IconButton>}
                  </IconCell>
                </Row>
              ))}
            </tbody>
          </GridTable>
          <GridScroll>
            <ScrollArrow aria-label="Вверх"><Caret up c="#a0a0a0" /></ScrollArrow>
            <Track $before={0} $thumb={264} $after={10} />
            <ScrollArrow aria-label="Вниз"><Caret /></ScrollArrow>
          </GridScroll>
        </GridBox>
        <Pager id="page-events" info="Записи 1 - 14 из 14" />
      </DialogFrame>

      <DialogFrame title="Подробности ошибки, переданные с ЕИС" x={985} y={543} bottom={5}>
        <GridBox>
          <GridTable $height={335} $gutter={15} $cols="28px 123px 1fr 11px">
            <thead>
              <tr>
                <HeadCell />
                <HeadCell $sorted>Критичность <Caret up c="#8a8a8a" s={7} /></HeadCell>
                <HeadCell>Описание</HeadCell>
              </tr>
            </thead>
            <tbody>
              <Row $selected>
                <Cell />
                <Cell>ошибка</Cell>
                <Cell colSpan={2}>{trace.map((line, i) => <TraceLine key={i}>{line}</TraceLine>)}</Cell>
              </Row>
            </tbody>
          </GridTable>
        </GridBox>
      </DialogFrame>
    </Screen>
  );
}
